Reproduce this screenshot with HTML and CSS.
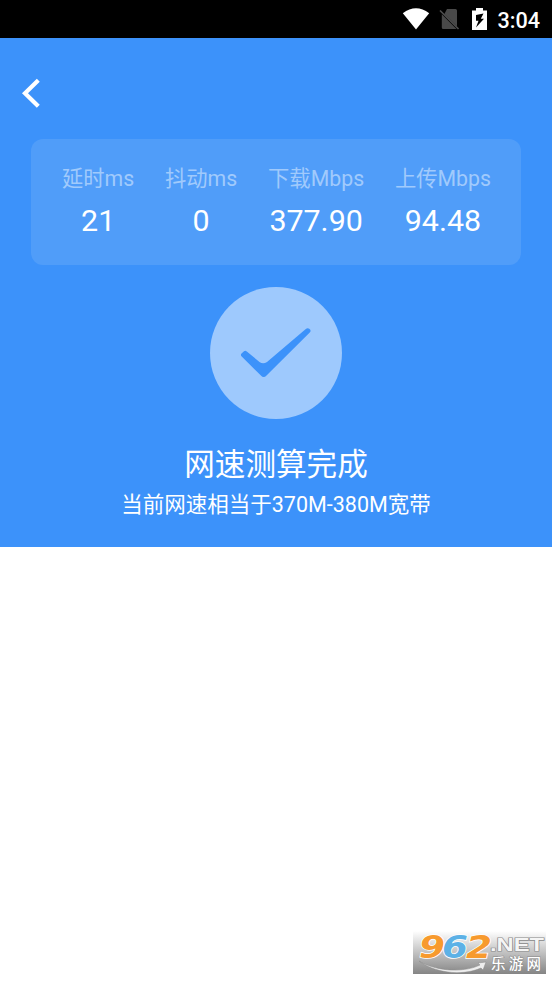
FILE: index.html
```html
<!DOCTYPE html>
<html lang="zh-CN">
<head>
<meta charset="utf-8">
<title>网速测算</title>
<link rel="stylesheet" href="styles.css">
</head>
<body>
<header class="status">
  <svg class="wifi" width="28" height="22" viewBox="0 0 28 22"><path d="M0.8 5.2Q14-4.6 27.2 5.2L14 21.6Z" fill="#fff"/></svg>
  <svg class="sim" width="22" height="22" viewBox="0 0 22 22"><path d="M8 1H16.500Q18 1 18 2.500V18.500L5.400 5.900ZM2.800 6.200L17.500 21H4.300Q2.800 21 2.800 19.500Z" fill="#494949"/><path d="M1 2.500L19.500 21" stroke="#505050" stroke-width="1.600"/></svg>
  <svg class="battery" width="15" height="23" viewBox="0 0 15 23"><path d="M4 0H11V2.400H15V22H0V2.400H4Z" fill="#fff"/><path d="M11.500 5.500L4 7V12.800H6.500L4 19.500L12 10.700H8.800Z" fill="#000"/></svg>
  <span class="clock">3:04</span>
</header>
<main class="result">
  <nav class="toolbar">
    <svg width="20" height="30" viewBox="0 0 20 30"><path d="M17.300 2.200L4 15.200L17.300 28.200" fill="none" stroke="#fff" stroke-width="4.200"/></svg>
  </nav>
  <section class="metrics">
    <div class="metric"><span class="label">延时ms</span><span class="value">21</span></div>
    <div class="metric"><span class="label">抖动ms</span><span class="value">0</span></div>
    <div class="metric"><span class="label">下载Mbps</span><span class="value">377.90</span></div>
    <div class="metric"><span class="label">上传Mbps</span><span class="value">94.48</span></div>
  </section>
  <svg class="done" width="132" height="132" viewBox="0 0 132 132"><circle cx="66" cy="66" r="66" fill="#9ec9fd"/><path d="M31.500 66.500L34 64.200Q35.300 63.200 36.800 64.400L49.500 75Q53 77.600 57 75L95.500 42.200Q97.500 40.500 99.300 41.700Q101.500 43.300 100 45.300L56.500 88.500Q53.700 91.500 50.900 88.500L31.700 69.500Q30.200 68 31.500 66.500Z" fill="#3c92fa"/></svg>
  <h1 class="title">网速测算完成</h1>
  <p class="summary">当前网速相当于370M-380M宽带</p>
</main>
<aside class="mark">
  <svg width="133" height="43" viewBox="0 0 133 43">
    <path d="M6 30C20 39 48 43 67 34L65 32L73 31L70 39L68 37C48 46 20 41 6 30Z" fill="#eee" stroke="#888" stroke-width=".5"/>
    <g class="digits">
      <text class="orange" x="6" y="27" textLength="26" lengthAdjust="spacingAndGlyphs">9</text>
      <text class="blue" x="29" y="27" textLength="26" lengthAdjust="spacingAndGlyphs">6</text>
      <text class="orange" x="53" y="27" textLength="26" lengthAdjust="spacingAndGlyphs">2</text>
    </g>
    <text class="net" x="77" y="20" textLength="54" lengthAdjust="spacingAndGlyphs">.NET</text>
    <text class="name" x="78" y="38" textLength="50">乐游网</text>
  </svg>
</aside>
</body>
</html>
```

FILE: styles.css
```css
* { box-sizing: border-box; }
body {
  margin: 0;
  height: 981px;
  display: flex;
  flex-direction: column;
  background: #fff;
  color: #fff;
  font-family: Roboto, "Noto Sans CJK SC", sans-serif;
  overflow: hidden;
}
.status {
  height: 38px;
  flex: none;
  display: flex;
  align-items: center;
  justify-content: flex-end;
  padding-right: 12px;
  background: #000;
}
.wifi { margin-right: 9px; }
.sim { margin-right: 11px; }
.battery { margin-right: 10px; }
.clock { font-size: 21.6px; font-weight: 500; line-height: 34px; padding-top: 4px; }
.result {
  height: 509px;
  flex: none;
  display: flex;
  flex-direction: column;
  align-items: center;
  background: #3c92fa;
}
.toolbar { width: 100%; height: 101px; padding: 40px 0 0 21px; }
.toolbar svg { display: block; }
.metrics {
  width: 490px;
  height: 126px;
  display: flex;
  justify-content: space-between;
  padding: 24px 30px 0 31px;
  border-radius: 12px;
  background: #509df9;
}
.metric { display: flex; flex-direction: column; align-items: center; }
.label { font-size: 21.3px; line-height: 32px; color: #a0cafc; }
.value { font-size: 30.4px; line-height: 36px; margin-top: 8px; }
.done { display: block; flex: none; margin-top: 21.500px; }
.title { margin: 24.500px 0 0; font-size: 30.6px; line-height: 44px; font-weight: 400; }
.summary { margin: 2px 0 0; font-size: 21.5px; line-height: 32px; }
.mark {
  width: 133px;
  height: 43px;
  margin: auto 6px 7px auto;
  background: linear-gradient(#fff, #858585);
}
.mark svg { display: block; overflow: visible; }
.digits {
  font: italic bold 32px "DejaVu Sans", sans-serif;
  stroke: #fff;
  stroke-width: 1.5px;
  paint-order: stroke;
}
.orange { fill: #f79a2e; }
.blue { fill: #5cb1e6; }
.net {
  font: bold 18px "Liberation Sans", sans-serif;
  fill: #f5f5f5;
  stroke: #888;
  stroke-width: 1.2px;
  paint-order: stroke;
}
.name {
  font: 500 14.5px "Noto Sans CJK SC", sans-serif;
  fill: #fff;
  stroke: #888;
  stroke-width: 1px;
  paint-order: stroke;
}
```
